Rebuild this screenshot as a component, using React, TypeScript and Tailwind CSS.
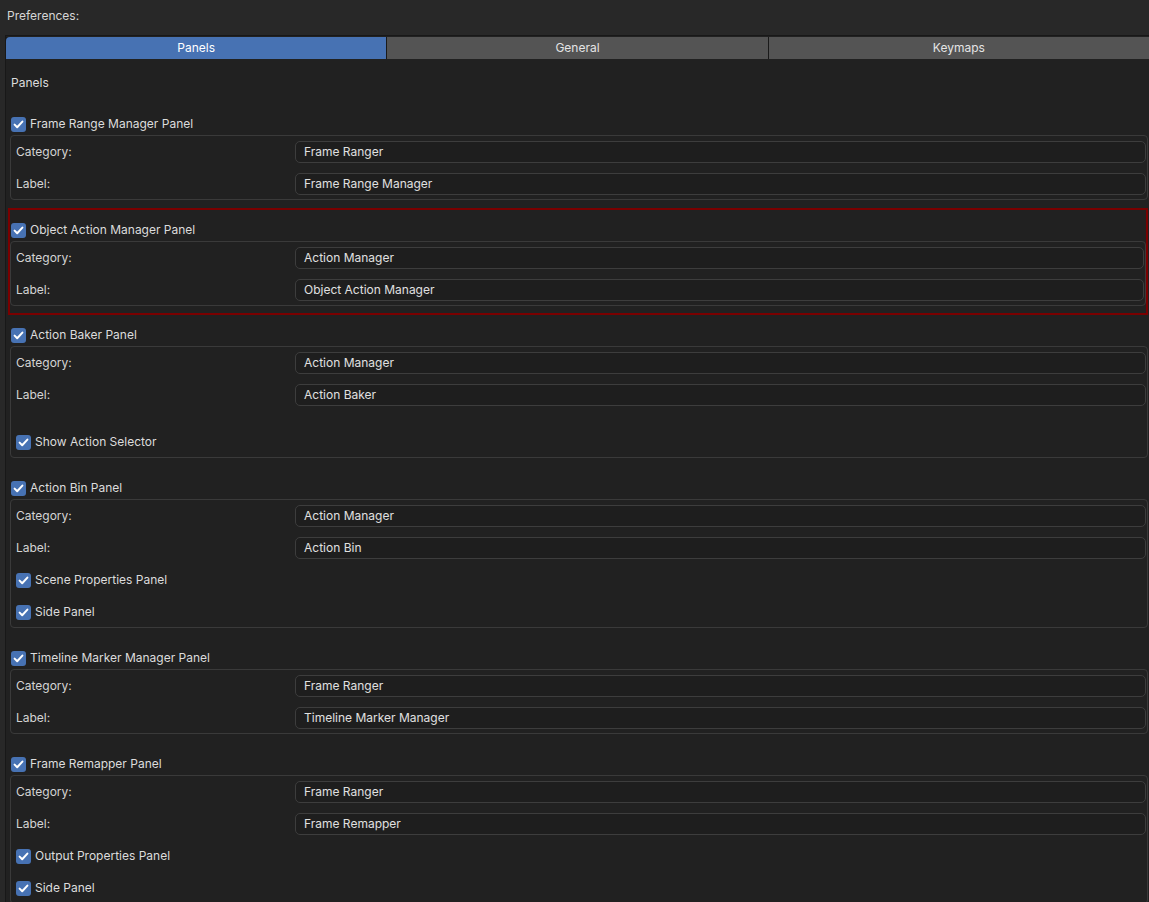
const font = { fontFamily: "Inter, 'Noto Sans', sans-serif" };

type Row =
  | { kind: "field"; label: string; value: string }
  | { kind: "check"; label: string; gapBefore?: boolean };

type Section = { title: string; rows: Row[]; highlight?: boolean };

const sections: Section[] = [
  {
    title: "Frame Range Manager Panel",
    rows: [
      { kind: "field", label: "Category:", value: "Frame Ranger" },
      { kind: "field", label: "Label:", value: "Frame Range Manager" },
    ],
  },
  {
    title: "Object Action Manager Panel",
    highlight: true,
    rows: [
      { kind: "field", label: "Category:", value: "Action Manager" },
      { kind: "field", label: "Label:", value: "Object Action Manager" },
    ],
  },
  {
    title: "Action Baker Panel",
    rows: [
      { kind: "field", label: "Category:", value: "Action Manager" },
      { kind: "field", label: "Label:", value: "Action Baker" },
      { kind: "check", label: "Show Action Selector", gapBefore: true },
    ],
  },
  {
    title: "Action Bin Panel",
    rows: [
      { kind: "field", label: "Category:", value: "Action Manager" },
      { kind: "field", label: "Label:", value: "Action Bin" },
      { kind: "check", label: "Scene Properties Panel" },
      { kind: "check", label: "Side Panel" },
    ],
  },
  {
    title: "Timeline Marker Manager Panel",
    rows: [
      { kind: "field", label: "Category:", value: "Frame Ranger" },
      { kind: "field", label: "Label:", value: "Timeline Marker Manager" },
    ],
  },
  {
    title: "Frame Remapper Panel",
    rows: [
      { kind: "field", label: "Category:", value: "Frame Ranger" },
      { kind: "field", label: "Label:", value: "Frame Remapper" },
      { kind: "check", label: "Output Properties Panel" },
      { kind: "check", label: "Side Panel" },
    ],
  },
];

const CheckBox = () => (
  <span className="w-[15px] h-[15px] rounded-[3px] bg-[#4772b3] flex items-center justify-center shrink-0">
    <svg width="15" height="15" viewBox="0 0 15 15">
      <polyline
        points="3.6,7.6 6.2,10.2 11.4,4.6"
        fill="none"
        stroke="#ffffff"
        strokeWidth="2"
        strokeLinecap="round"
        strokeLinejoin="round"
      />
    </svg>
  </span>
);

const CheckRow = ({ label }: { label: string }) => (
  <div className="h-[22px] flex items-center">
    <CheckBox />
    <span className="ml-[4px] text-[12px] text-[#dcdcdc]">{label}</span>
  </div>
);

const PanelSection = ({ section }: { section: Section }) => {
  const body = (
    <div>
      <div className="pl-[1px]">
        <CheckRow label={section.title} />
      </div>
      <div className="border border-[#3a3a3a] rounded-[4px] pt-[5px] pb-[4px] pl-[5px] pr-[1px] flex flex-col gap-[10px]">
        {section.rows.map((row, i) =>
          row.kind === "field" ? (
            <div key={i} className="h-[22px] flex items-center">
              <span className="w-[279px] shrink-0 text-[12px] text-[#d4d4d4]">{row.label}</span>
              <div className="flex-1 h-[22px] rounded-[5px] border border-[#3d3d3d] bg-[#1e1e1e] pl-[8px] flex items-center text-[12px] text-[#e0e0e0]">
                {row.value}
              </div>
            </div>
          ) : (
            <div key={i} className={row.gapBefore ? "mt-[15px]" : ""}>
              <CheckRow label={row.label} />
            </div>
          )
        )}
      </div>
    </div>
  );

  if (section.highlight) {
    return (
      <div className="-mt-[11px] -mb-[10px] -ml-[2px] border-2 border-[#7a0000] pt-[9px] pb-[7px]">
        {body}
      </div>
    );
  }
  return body;
};

export default function App() {
  return (
    <div className="w-[1149px] h-[902px] overflow-hidden bg-[#282828] text-[#dddddd]" style={font}>
      <div className="h-[30px] pt-[2px] pl-[7px] flex items-center text-[12px] text-[#d6d6d6]">Preferences:</div>
      <div className="mt-[5px] ml-[5px] border-l border-t border-[#181818] bg-[#212121] h-[900px]">
        <div className="mt-[1px] h-[22px] flex gap-[1px] bg-[#1a1a1a]">
          <div className="flex-1 bg-[#4772b3] rounded-tl-[4px] flex items-center justify-center text-[12px] text-white">
            Panels
          </div>
          <div className="flex-1 bg-[#545454] flex items-center justify-center text-[12px] text-[#e4e4e4]">
            General
          </div>
          <div className="flex-1 bg-[#545454] flex items-center justify-center text-[12px] text-[#e4e4e4]">
            Keymaps
          </div>
        </div>
        <div className="pt-[13px] pl-[4px] pr-[1px] flex flex-col gap-[19px]">
          <div className="h-[22px] pl-[1px] flex items-center text-[12px] text-[#dcdcdc]">Panels</div>
          {sections.map((s) => (
            <PanelSection key={s.title} section={s} />
          ))}
        </div>
      </div>
    </div>
  );
}
